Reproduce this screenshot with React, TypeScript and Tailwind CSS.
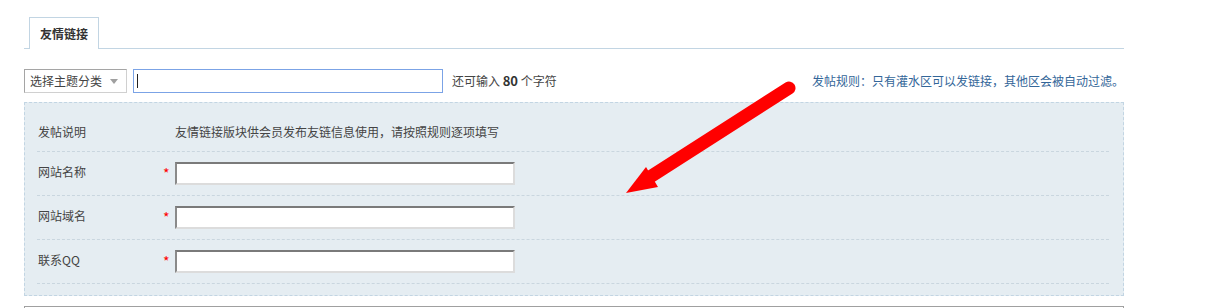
import React from "react";

function FieldRow({ label }: { label: string }) {
  return (
    <div className="flex h-[44px] items-center border-b border-dashed border-[#c9d6df]">
      <div className="w-[125px] pb-[3px] pl-[1px] text-[#444]">{label}</div>
      <div className="w-[13px] pb-[2px] pl-[1px] text-[14px] leading-none text-[#f00]">*</div>
      <div className="h-[23px] w-[340px] border-2 border-t-[#7a7a7a] border-l-[#8a8a8a] border-r-[#dcdcdc] border-b-[#dcdcdc] bg-white" />
    </div>
  );
}

export default function App() {
  return (
    <div className="relative h-[308px] w-[1208px] overflow-hidden bg-white font-['Noto_Sans_CJK_SC','Microsoft_YaHei',sans-serif] text-[12px] text-[#333]">
      <div className="ml-[24px] w-[1100px] pt-[17px]">
        {/* tabs */}
        <div className="flex border-b border-[#c2d5e3]">
          <div className="-mb-px ml-[5px] flex h-[32px] w-[70px] items-center justify-center border border-b-0 border-[#c2d5e3] bg-white font-bold text-[#333]">
            友情链接
          </div>
        </div>

        {/* subject row */}
        <div className="mt-[20px] flex h-[24px] items-center">
          <div className="flex h-[24px] w-[103px] items-center justify-between border border-[#a5a5a5] border-r-[#d0d0d0] border-b-[#d0d0d0] bg-white pl-[5px] pr-[8px] text-[#444]">
            <span>选择主题分类</span>
            <svg width="8" height="5" viewBox="0 0 8 5">
              <path d="M0 0 L8 0 L4 5 Z" fill="#a0a0a0" />
            </svg>
          </div>
          <div className="ml-[6px] flex h-[24px] w-[310px] items-center border border-[#7ba3e6] bg-white pl-[3px]">
            <div className="h-[14px] w-px bg-[#222]" />
          </div>
          <div className="ml-[9px] text-[#444]">
            还可输入 <span className="text-[13px] font-bold text-[#333]">80</span> 个字符
          </div>
          <div className="ml-auto text-[#336699]">
            发帖规则：只有灌水区可以发链接，其他区会被自动过滤。
          </div>
        </div>

        {/* panel */}
        <div className="mt-[9px] border border-dashed border-[#c2d5e3] bg-[#e5edf2] pb-[11px] pl-[12px] pr-[14px] pt-[9px]">
          <div className="flex h-[40px] items-center border-b border-dashed border-[#c9d6df]">
            <div className="w-[138px] pl-[1px] text-[#444]">发帖说明</div>
            <div className="text-[#444]">友情链接版块供会员发布友链信息使用，请按照规则逐项填写</div>
          </div>
          <FieldRow label="网站名称" />
          <FieldRow label="网站域名" />
          <FieldRow label="联系QQ" />
        </div>

        {/* next box */}
        <div className="mt-[10px] h-[20px] border border-b-0 border-[#a0a0a0] bg-white" />
      </div>

      {/* red annotation arrow */}
      <svg
        className="pointer-events-none absolute left-0 top-0"
        width="1208"
        height="308"
        viewBox="0 0 1208 308"
      >
        <line
          x1="789"
          y1="88"
          x2="650"
          y2="177"
          stroke="#ff0000"
          strokeWidth="13"
          strokeLinecap="round"
        />
        <polygon points="626,193 646,167 658,187" fill="#ff0000" />
      </svg>
    </div>
  );
}
